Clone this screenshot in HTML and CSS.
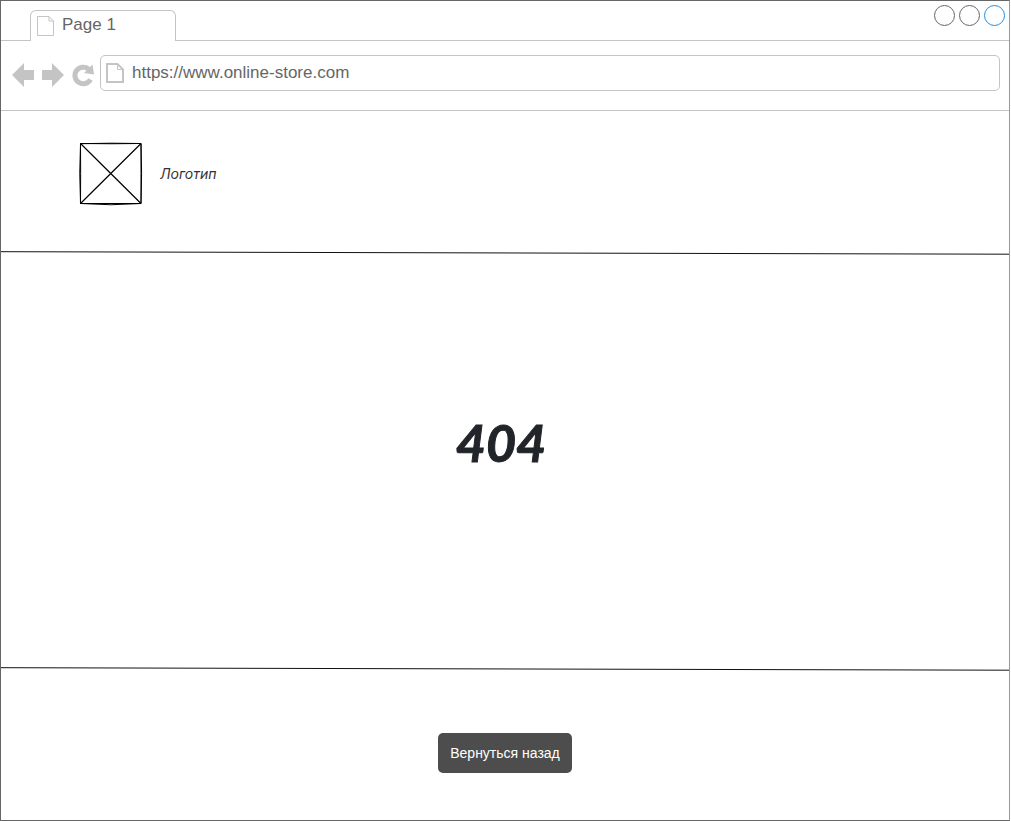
FILE: index.html
```html
<!DOCTYPE html>
<html lang="ru">
<head>
<meta charset="utf-8">
<meta name="viewport" content="width=device-width, initial-scale=1">
<title>404</title>
<link rel="stylesheet" href="styles.css">
</head>
<body>
<div class="browser">
  <div class="tabbar">
    <button class="tab" type="button">
      <svg class="tab-icon" viewBox="0 0 17 20" aria-hidden="true"><path d="M.5 .5H12L16.500 5V19.500H.5ZM12 .5V5H16.500"/></svg>
      <span>Page 1</span>
    </button>
    <div class="tabbar-rest">
      <button class="dot" type="button" aria-label="Minimize"></button>
      <button class="dot" type="button" aria-label="Maximize"></button>
      <button class="dot dot-close" type="button" aria-label="Close"></button>
    </div>
  </div>
  <div class="toolbar">
    <div class="navs">
      <button class="nav" type="button" aria-label="Back"><svg viewBox="0 0 22 24"><path d="M0 12L12 0V7H22V17H12V24Z"/></svg></button>
      <button class="nav" type="button" aria-label="Forward"><svg viewBox="0 0 22 24"><path d="M22 12L10 0V7H0V17H10V24Z"/></svg></button>
      <button class="nav" type="button" aria-label="Reload"><svg viewBox="0 0 22 24"><path class="reload-arc" d="M18.500 16.500A8.300 8.300 0 1 1 16.500 6"/><path d="M20.500 1.500L22 11.500L12 10Z"/></svg></button>
    </div>
    <label class="address">
      <svg class="address-icon" viewBox="0 0 18 20" aria-hidden="true"><path d="M1 1H11.500L17 6.500V19H1Z"/><path class="fold" d="M11.500 1V6.500H17"/></svg>
      <input class="address-input" type="text" aria-label="Address" value="https://www.online-store.com">
    </label>
  </div>
  <header class="site-header">
    <svg class="logo" viewBox="0 0 64 64" aria-hidden="true">
      <path class="logo-cross" d="M1.500 1.500L62 61.500M62 1.500L1.500 61.500"/>
      <path d="M1.500 1.700Q32 .8 62 1.500Q63.200 31 62 61.500Q32 64 1.500 61.500Q0 31 1.500 1.500Q32 2 62 1.500Q62 31 62 61.500H1.500Q1.800 31 1.500 1.500"/>
    </svg>
    <span class="logo-text">Логотип</span>
  </header>
  <svg class="rule" viewBox="0 0 1008 4" preserveAspectRatio="none" aria-hidden="true"><path d="M0 .7L1008 3.200"/></svg>
  <main class="content"><h1 class="code">404</h1></main>
  <svg class="rule" viewBox="0 0 1008 4" preserveAspectRatio="none" aria-hidden="true"><path d="M0 .7L1008 3.200"/></svg>
  <footer class="site-footer"><button class="back" type="button">Вернуться назад</button></footer>
</div>
</body>
</html>
```
FILE: styles.css
```css
* { box-sizing: border-box; }
body {
  margin: 0;
  background: #fff;
  font-family: "Liberation Sans", Arial, sans-serif;
  color: #666;
}
button {
  margin: 0;
  padding: 0;
  border: 0;
  background: none;
  font-family: inherit;
  color: inherit;
}
svg { display: block; flex: none; fill: none; }
.browser {
  display: flex;
  flex-direction: column;
  min-height: 100vh;
  margin-right: 1px;
  border: 1px solid #666;
  border-right-color: #999;
}
.tabbar { display: flex; height: 40px; }
.tabbar::before {
  content: "";
  width: 29px;
  border-bottom: 1px solid #c4c4c4;
}
.tab {
  display: flex;
  align-items: center;
  gap: 8px;
  width: 146px;
  margin-top: 9px;
  padding: 0 6px 3px 6px;
  border: 1px solid #c4c4c4;
  border-bottom: 0;
  border-radius: 6px 6px 0 0;
  font-size: 17px;
  line-height: 20px;
}
.tab-icon { width: 17px; height: 20px; margin-top: 3px; stroke: #c4c4c4; }
.tabbar-rest {
  display: flex;
  flex: 1;
  justify-content: flex-end;
  gap: 4px;
  padding: 4px 4px 0 0;
  border-bottom: 1px solid #c4c4c4;
}
.dot { width: 21px; height: 21px; border: 1px solid #666; border-radius: 50%; }
.dot-close { border-color: #1e90e8; }
.toolbar {
  display: flex;
  align-items: center;
  gap: 6px;
  height: 70px;
  padding: 0 9px 5px 11px;
  border-bottom: 1px solid #c4c4c4;
}
.navs { display: flex; gap: 8px; padding-top: 3px; }
.nav { width: 22px; height: 24px; }
.nav svg { width: 22px; height: 24px; fill: #c4c4c4; }
.nav .reload-arc { fill: none; stroke: #c4c4c4; stroke-width: 5; }
.address {
  display: flex;
  flex: 1;
  align-items: center;
  gap: 8px;
  height: 36px;
  padding: 0 5px;
  border: 1px solid #c4c4c4;
  border-radius: 5px;
}
.address-icon { width: 18px; height: 20px; stroke: #c4c4c4; stroke-width: 2; }
.address-icon .fold { stroke-width: 1; }
.address-input {
  flex: 1;
  min-width: 0;
  padding: 0;
  border: 0;
  outline: 0;
  background: none;
  font: 17px/20px "Liberation Sans", Arial, sans-serif;
  color: #666;
}
.site-header {
  display: flex;
  align-items: center;
  gap: 17px;
  height: 140px;
  padding: 0 78px 14px;
}
.logo { width: 64px; height: 64px; stroke: #000; stroke-width: 1; }
.logo-cross { stroke-width: 1.200; }
.logo-text {
  font: italic 400 14px/20px Inter, "Open Sans", sans-serif;
  color: #333;
}
.rule { width: 100%; height: 4px; stroke: #111; stroke-width: 1; }
.content {
  display: flex;
  flex: 1;
  align-items: center;
  justify-content: center;
  padding: 0 8px 38px 0;
}
.code {
  margin: 0;
  font: italic 700 52px/60px Lato, "Open Sans", sans-serif;
  color: #212529;
  -webkit-text-stroke: 1px #212529;
}
.site-footer {
  display: flex;
  justify-content: center;
  align-items: flex-start;
  height: 149px;
  padding-top: 62px;
}
.back {
  height: 40px;
  padding: 0 12px;
  border-radius: 5px;
  background: #4d4d4d;
  font-size: 14px;
  color: #fff;
}
```
